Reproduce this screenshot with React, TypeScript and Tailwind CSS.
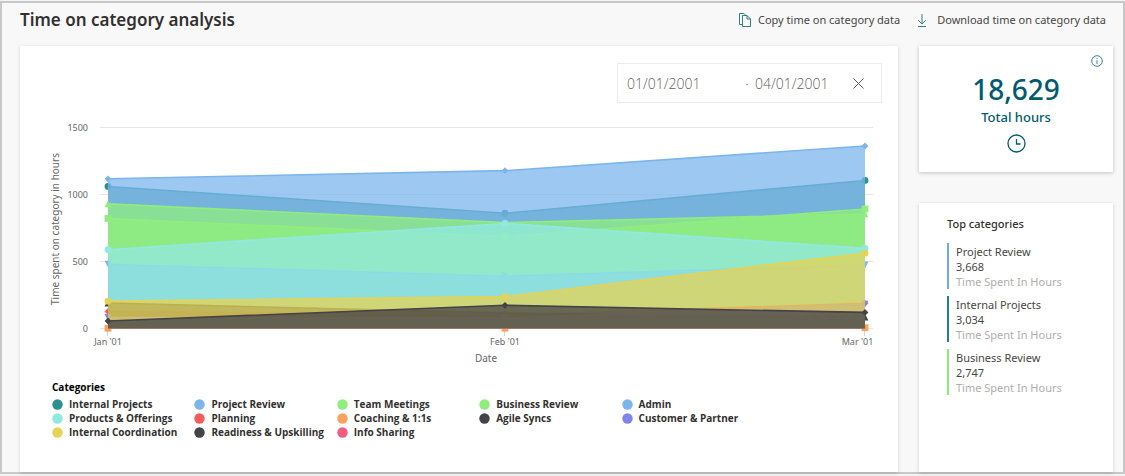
import React, { useState } from 'react';

type Marker = 'circle' | 'diamond' | 'square' | 'triangle' | 'triangle-down';

interface Series {
  name: string;
  color: string;
  marker: Marker;
  values: [number, number, number];
}

const series: Series[] = [
  { name: 'Internal Projects', color: '#2b908f', marker: 'circle', values: [1060, 860, 1105] },
  { name: 'Project Review', color: '#7cb5ec', marker: 'diamond', values: [1117, 1178, 1362] },
  { name: 'Team Meetings', color: '#90ed7d', marker: 'square', values: [821, 687, 892] },
  { name: 'Business Review', color: '#90ed7d', marker: 'triangle', values: [930, 790, 855] },
  { name: 'Admin', color: '#7cb5ec', marker: 'triangle-down', values: [480, 390, 474] },
  { name: 'Products & Offerings', color: '#91e8e1', marker: 'circle', values: [588, 784, 598] },
  { name: 'Planning', color: '#f45b5b', marker: 'diamond', values: [127, 100, 188] },
  { name: 'Coaching & 1:1s', color: '#f7a35c', marker: 'square', values: [2, 2, 6] },
  { name: 'Agile Syncs', color: '#434348', marker: 'triangle', values: [190, 115, 85] },
  { name: 'Customer & Partner', color: '#8085e9', marker: 'triangle-down', values: [82, 78, 182] },
  { name: 'Internal Coordination', color: '#e4d354', marker: 'circle', values: [204, 238, 562] },
  { name: 'Readiness & Upskilling', color: '#434348', marker: 'diamond', values: [56, 173, 120] },
  { name: 'Info Sharing', color: '#f15c80', marker: 'square', values: [0, 0, 0] },
];

const topCategories = [
  { name: 'Project Review', hours: '3,668', bar: 'border-[#6fa8f0]' },
  { name: 'Internal Projects', hours: '3,034', bar: 'border-[#1d8480]' },
  { name: 'Business Review', hours: '2,747', bar: 'border-[#86ed72]' },
];

const months = [
  { label: "Jan '01", x: 108 },
  { label: "Feb '01", x: 505 },
  { label: "Mar '01", x: 865 },
];

const yFor = (value: number) => 328.5 - (value / 1500) * 201;

function MarkerShape({ kind, x, y, color }: { kind: Marker; x: number; y: number; color: string }) {
  const r = 3.4;
  switch (kind) {
    case 'circle':
      return <circle cx={x} cy={y} r={r} fill={color} />;
    case 'square':
      return <rect x={x - r} y={y - r} width={r * 2} height={r * 2} fill={color} />;
    case 'diamond':
      return <path d={`M${x} ${y - r}L${x + r} ${y}L${x} ${y + r}L${x - r} ${y}Z`} fill={color} />;
    case 'triangle':
      return <path d={`M${x} ${y - r}L${x + r} ${y + r}H${x - r}Z`} fill={color} />;
    default:
      return <path d={`M${x - r} ${y - r}H${x + r}L${x} ${y + r}Z`} fill={color} />;
  }
}

function AreaChart() {
  return (
    <svg
      viewBox="20 103 878 264"
      className="block h-auto w-full font-['Noto_Sans',sans-serif]"
      role="img"
      aria-label="Time spent on category in hours by month"
    >
      {[0, 500, 1000, 1500].map((tick) => (
        <g key={tick}>
          <path d={`M100 ${Math.floor(yFor(tick)) + 0.5}H873`} stroke="#e6e6e6" />
          <text x="88" y={yFor(tick) + 3} textAnchor="end" fontSize="9" fill="#666666">
            {tick}
          </text>
        </g>
      ))}
      {months.map((m) => (
        <path key={m.label} d={`M${m.x - 0.5} 328V336`} stroke="#ccd6eb" />
      ))}
      {series.map((s) => {
        const points = s.values.map((v, i) => ({ x: months[i].x, y: yFor(v) }));
        const line = points.map((p) => `${p.x} ${p.y}`).join('L');
        const isFlat = s.values.every((v) => v === 0);
        return (
          <g key={s.name}>
            <path d={`M${line}L865 328.5L108 328.5Z`} fill={s.color} fillOpacity="0.75" />
            <path d={`M${line}`} fill="none" stroke={s.color} strokeWidth={isFlat ? 1 : 1.6} strokeOpacity={isFlat ? 0.2 : 1} />
            {!isFlat && points.map((p) => <MarkerShape key={p.x} kind={s.marker} x={p.x} y={p.y} color={s.color} />)}
          </g>
        );
      })}
      {months.map((m) => (
        <text key={m.label} x={m.x === 865 ? 857.5 : m.x} y="345" textAnchor="middle" fontSize="9" fill="#666666">
          {m.label}
        </text>
      ))}
      <text x="486" y="362" textAnchor="middle" fontSize="10" fill="#666666">
        Date
      </text>
      <text transform="translate(59 229) rotate(-90)" textAnchor="middle" fontSize="10" fill="#666666">
        Time spent on category in hours
      </text>
    </svg>
  );
}

function CopyIcon() {
  return (
    <svg width="14" height="16" viewBox="0 0 14 16" fill="none" stroke="#2f8280" aria-hidden="true">
      <path d="M4 12.500H1.500V1.500H6L8 3.500" />
      <path d="M4.500 3.500H9L12.500 7V14.500H4.500ZM9 3.500V7H12.500" />
    </svg>
  );
}

function DownloadIcon() {
  return (
    <svg width="10" height="15" viewBox="0 0 10 15" fill="none" stroke="#2f8280" aria-hidden="true">
      <path d="M5 1V11M1.200 7.200L5 11L8.800 7.200M1 13.500H9" />
    </svg>
  );
}

export default function App() {
  const [from, setFrom] = useState('01/01/2001');
  const [to, setTo] = useState('04/01/2001');

  return (
    <div className="bg-[#f4f4f4] pt-px pb-[2px] font-['Noto_Sans','Open_Sans',sans-serif] text-[#323130]">
      <main className="border-2 border-[#c8c8c8] bg-[#f8f8f8]">
        <header className="flex items-center justify-between pt-[6px] pr-[17px] pb-[15px] pl-[18px]">
          <h1 className="text-[17px] leading-[22px] font-semibold">Time on category analysis</h1>
          <div className="flex gap-[17px] text-[11px] leading-[22px] text-[#484644]">
            <button type="button" className="flex items-center gap-1.5">
              <CopyIcon />
              Copy time on category data
            </button>
            <button type="button" className="flex items-center gap-2.5">
              <DownloadIcon />
              Download time on category data
            </button>
          </div>
        </header>

        <div className="flex gap-[21px] pr-[10px] pl-[18px]">
          <section className="min-w-0 flex-1 bg-white pb-[33px] shadow-[0_1px_4px_rgba(0,0,0,0.16)]">
            <div className="flex justify-end pt-[17px] pr-4">
              <div className="flex h-10 w-[265px] items-center border border-[#ebebeb] pl-[9px] font-['Open_Sans',sans-serif] text-[14px] font-light text-[#605e5c]">
                <input
                  aria-label="Start date"
                  value={from}
                  onChange={(e) => setFrom(e.target.value)}
                  className="w-[112px] bg-transparent outline-none"
                />
                <span className="w-4 text-center">·</span>
                <input
                  aria-label="End date"
                  value={to}
                  onChange={(e) => setTo(e.target.value)}
                  className="w-[90px] bg-transparent outline-none"
                />
                <button
                  type="button"
                  aria-label="Clear dates"
                  className="ml-2"
                  onClick={() => {
                    setFrom('');
                    setTo('');
                  }}
                >
                  <svg width="11" height="11" viewBox="0 0 11 11" stroke="#605e5c" aria-hidden="true">
                    <path d="M0.500 0.500L10.500 10.500M10.500 0.500L0.500 10.500" />
                  </svg>
                </button>
              </div>
            </div>

            <AreaChart />

            <div className="pt-[13px] pl-8 font-['Open_Sans',sans-serif] text-[10px] leading-[14px] font-bold">
              <h2 className="text-black">Categories</h2>
              <ul className="mt-[3px] grid w-[712px] max-w-full grid-cols-5">
                {series.map((s) => (
                  <li key={s.name} className="flex items-center gap-1.5 whitespace-nowrap">
                    <svg width="11" height="11" viewBox="0 0 11 11" className="shrink-0" aria-hidden="true">
                      <circle cx="5.500" cy="5.500" r="5.200" fill={s.color} />
                    </svg>
                    {s.name}
                  </li>
                ))}
              </ul>
            </div>
          </section>

          <aside className="flex w-[194px] shrink-0 flex-col gap-[31px]">
            <section className="relative flex flex-col items-center bg-white pt-6 pb-[19px] text-[#005b70] shadow-[0_1px_4px_rgba(0,0,0,0.22)]">
              <button type="button" aria-label="About total hours" className="absolute top-[9px] right-[10px]">
                <svg width="12" height="12" viewBox="0 0 12 12" fill="none" stroke="#3a8499" aria-hidden="true">
                  <circle cx="6" cy="6" r="5.300" />
                  <path d="M6 5.200V9M6 3V4.200" />
                </svg>
              </button>
              <strong className="text-[28px] leading-[38px] font-medium">18,629</strong>
              <span className="text-[13px] leading-[18px] font-medium">Total hours</span>
              <svg width="19" height="19" viewBox="0 0 19 19" fill="none" stroke="#005b70" strokeWidth="1.300" className="mt-2" aria-hidden="true">
                <circle cx="9.500" cy="9.500" r="8.500" />
                <path d="M9.500 5V10H13.500" />
              </svg>
            </section>

            <section className="flex-1 bg-white px-7 pt-[13px] shadow-[0_1px_4px_rgba(0,0,0,0.16)]">
              <h2 className="text-[11px] leading-4 font-medium">Top categories</h2>
              <ul className="mt-[11px] flex flex-col gap-[7px]">
                {topCategories.map((c) => (
                  <li key={c.name} className={`border-l-2 pt-px pl-[7px] text-[11px] leading-[15px] text-[#484644] ${c.bar}`}>
                    <p>{c.name}</p>
                    <p>{c.hours}</p>
                    <p className="whitespace-nowrap text-[#b0aeac]">Time Spent In Hours</p>
                  </li>
                ))}
              </ul>
            </section>
          </aside>
        </div>
      </main>
    </div>
  );
}
